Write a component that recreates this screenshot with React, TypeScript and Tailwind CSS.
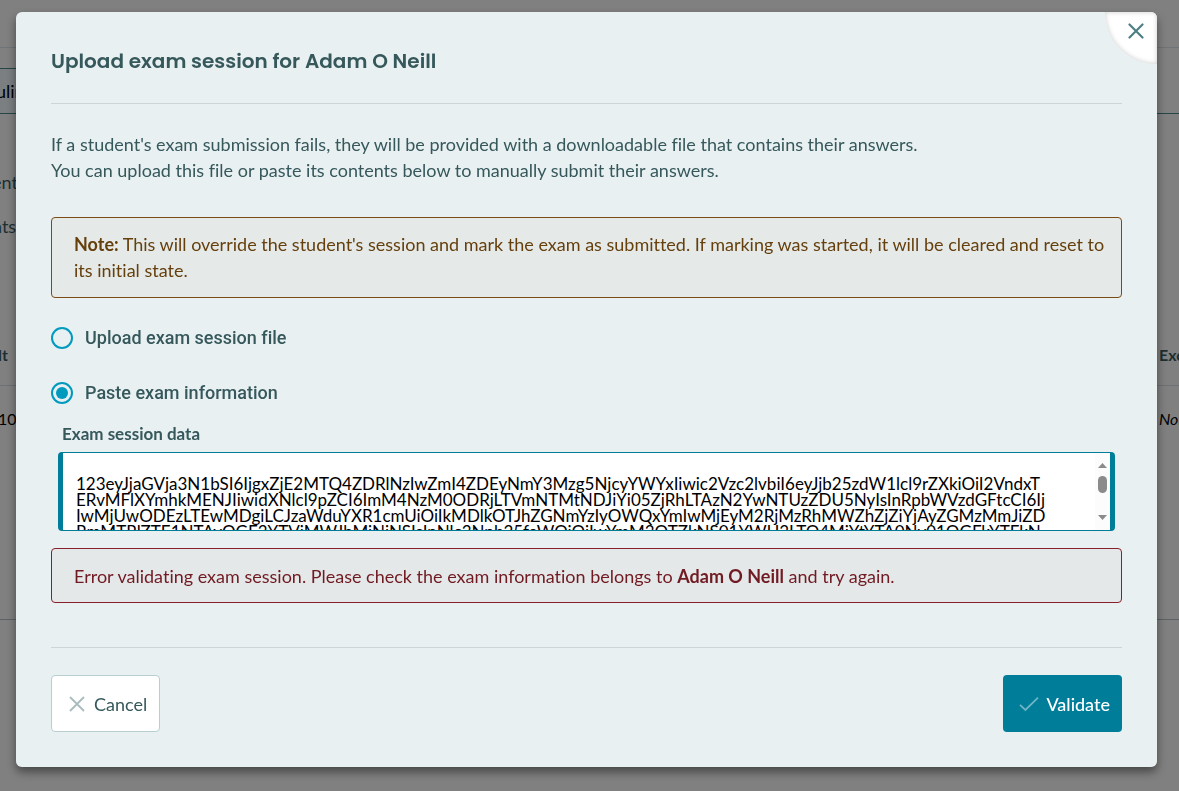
import { useState } from 'react';
import type { FC, ReactNode } from 'react';

const STUDENT = 'Adam O Neill';

const SESSION_DATA = [
  '123eyJjaGVja3N1bSI6IjgxZjE2MTQ4ZDRlNzIwZmI4ZDEyNmY3Mzg5NjcyYWYxIiwic2Vzc2lvbiI6eyJjb25zdW1lcl9rZXkiOiI2VndxT',
  'ERvMFlXYmhkMENJIiwidXNlcl9pZCI6ImM4NzM0ODRjLTVmNTMtNDJiYi05ZjRhLTAzN2YwNTUzZDU5NyIsInRpbWVzdGFtcCI6Ij',
  'IwMjUwODEzLTEwMDgiLCJzaWduYXR1cmUiOiIkMDlkOTJhZGNmYzIyOWQxYmIwMjEyM2RjMzRhMWZhZjZiYjAyZGMzMmJiZD',
  'RmMTRlZTE1NTAyOGE3YTVjMWJhMjNjNSIsInNlc3Npb25faWQiOiIwYmM3OTZkNS01YWU3LTQ4MjYtYTA0Ny01OGFkYTFkN'
].join('\n');

// The exam page that sits dimmed behind the dialog
const Backdrop: FC = () => (
  <main className="h-screen overflow-hidden whitespace-nowrap bg-[#808080] text-[18px] leading-[26px] text-[#1d2f31]">
    <div className="h-12 border-b border-[#707476]" />
    <div className="flex h-[66px] items-end border-b border-[#264648]">
      <div className="flex h-[45px] w-10 items-center border-t border-[#264648] bg-[#7b7f82] text-black">
        <span className="-ml-1">uling</span>
      </div>
    </div>
    <div className="-ml-2 flex h-[226px] flex-col gap-[18px] pt-[55px]">
      <p>ent</p>
      <p>nts</p>
    </div>
    <div className="flex h-[46px] justify-between border-b border-[#6d7173] pt-0.5 text-[16px] font-bold">
      <span className="-ml-0.5">lt</span>
      <span className="w-5">Excluded</span>
    </div>
    <div className="flex h-[234px] justify-between border-b border-[#5d6365] pt-5 text-[16px] text-black">
      <span className="-ml-0.5">10</span>
      <span className="w-5 italic">None</span>
    </div>
  </main>
);

const CrossIcon: FC<{ className: string; strokeWidth: number }> = ({ className, strokeWidth }) => (
  <svg
    className={className}
    viewBox="0 0 16 16"
    fill="none"
    stroke="currentColor"
    strokeWidth={strokeWidth}
    strokeLinecap="round"
    aria-hidden="true"
  >
    <path d="M1.5 1.5 14.5 14.5M14.5 1.5 1.5 14.5" />
  </svg>
);

const CheckIcon: FC = () => (
  <svg
    className="h-4 w-5 text-[#6fb3c6]"
    viewBox="0 0 20 16"
    fill="none"
    stroke="currentColor"
    strokeWidth="1.8"
    aria-hidden="true"
  >
    <path d="M1 8.8 6.4 14 19 1.6" />
  </svg>
);

interface OptionProps {
  value: string;
  selected: string;
  onSelect: (value: string) => void;
  children: ReactNode;
}

const Option: FC<OptionProps> = ({ value, selected, onSelect, children }) => (
  <label className="flex items-center gap-3 font-['Roboto',sans-serif] text-[18px] leading-[22px] font-medium">
    <input
      type="radio"
      name="source"
      value={value}
      checked={selected === value}
      onChange={() => onSelect(value)}
      className="grid size-[22px] shrink-0 appearance-none place-items-center rounded-full border-2 border-[#009abf] checked:after:block checked:after:size-3 checked:after:rounded-full checked:after:bg-[#009abf] checked:after:content-['']"
    />
    {children}
  </label>
);

const Scrollbar: FC = () => (
  <div
    className="pointer-events-none absolute top-px right-[5px] bottom-px flex w-[15px] flex-col items-center bg-[#fcfcfc] py-[10px] text-[#8b8b8b]"
    aria-hidden="true"
  >
    <svg className="h-[5px] w-[9px]" viewBox="0 0 9 5" fill="currentColor">
      <path d="M0 5 4.5 0 9 5Z" />
    </svg>
    <div className="mt-2 h-[17px] w-[9px] rounded-full bg-current" />
    <svg className="mt-auto h-[5px] w-[9px]" viewBox="0 0 9 5" fill="currentColor">
      <path d="M0 0 4.5 5 9 0Z" />
    </svg>
  </div>
);

const UploadDialog: FC = () => {
  const [source, setSource] = useState('paste');
  const [data, setData] = useState(SESSION_DATA);

  return (
    <section
      role="dialog"
      aria-labelledby="dialog-title"
      className="relative w-full overflow-hidden rounded-md bg-[#e8f0f2] px-[35px] pb-[35px] text-[18px] leading-[26px] text-[#36585b] [font-variant-ligatures:none]"
    >
      <button
        type="button"
        aria-label="Close"
        className="absolute top-0 right-0 flex size-[52px] items-center justify-center rounded-bl-full bg-white pb-[14px] pl-[10px] text-[#4d8086] shadow-[inset_0_0_5px_rgba(0,0,0,0.2)]"
      >
        <CrossIcon className="size-4" strokeWidth={2.2} />
      </button>

      <header className="border-b border-[#ccd6d9] pt-[33px] pb-[26px]">
        <h1
          id="dialog-title"
          className="font-['Poppins','Inter',sans-serif] text-[20px] leading-8 font-semibold"
        >
          Upload exam session for {STUDENT}
        </h1>
      </header>

      <p className="pt-[27px]">
        If a student's exam submission fails, they will be provided with a downloadable file that
        contains their answers.
        <br />
        You can upload this file or paste its contents below to manually submit their answers.
      </p>

      <p className="mt-[34px] rounded border border-[#7a4b12] bg-[#e5eae9] pt-[13px] pr-3 pb-[14px] pl-[22px] text-[#653f0c]">
        <b>Note:</b> This will override the student's session and mark the exam as submitted. If
        marking was started, it will be cleared and reset to its initial state.
      </p>

      <div className="mt-[29px] flex flex-col gap-[33px]">
        <Option value="file" selected={source} onSelect={setSource}>
          Upload exam session file
        </Option>
        <Option value="paste" selected={source} onSelect={setSource}>
          Paste exam information
        </Option>
      </div>

      <div className="mt-[17px] px-[7px] text-[17px]">
        <label htmlFor="session-data" className="block pl-1 font-bold">
          Exam session data
        </label>
        <div className="relative mt-[5px]">
          <textarea
            id="session-data"
            value={data}
            onChange={(e) => setData(e.target.value)}
            spellCheck={false}
            className="block h-[79px] w-full resize-none overflow-x-hidden rounded border-x-[5px] border-y border-[#007d99] bg-white pt-[23px] pr-4 pl-[13px] leading-4 whitespace-pre text-black outline-none [scrollbar-width:none]"
          />
          <Scrollbar />
        </div>
      </div>

      <p
        role="alert"
        className="mt-[17px] rounded border border-[#86202b] bg-[#e5e8e9] px-[22px] pt-[14px] pb-[13px] text-[#701a22]"
      >
        Error validating exam session. Please check the exam information belongs to{' '}
        <b>{STUDENT}</b> and try again.
      </p>

      <footer className="mt-11 flex justify-between border-t border-[#ccd6d9] pt-[27px]">
        <button
          type="button"
          className="flex h-[57px] items-center gap-[9px] rounded border border-[#b8ced1] bg-white pr-3 pl-[17px]"
        >
          <CrossIcon className="size-4 text-[#a9bcbd]" strokeWidth={1.8} />
          Cancel
        </button>
        <button
          type="button"
          className="flex h-[57px] items-center gap-[7px] rounded bg-[#007d99] pr-3 pl-4 font-medium text-white"
        >
          <CheckIcon />
          Validate
        </button>
      </footer>
    </section>
  );
};

export default function App() {
  return (
    <div className="font-['Lato',sans-serif]">
      <Backdrop />
      <div className="fixed inset-0 flex items-start overflow-y-auto pt-3 pr-[22px] pb-6 pl-4">
        <div className="w-full rounded-md shadow-[0_5px_10px_rgba(0,0,0,0.45)]">
          <UploadDialog />
        </div>
      </div>
    </div>
  );
}
